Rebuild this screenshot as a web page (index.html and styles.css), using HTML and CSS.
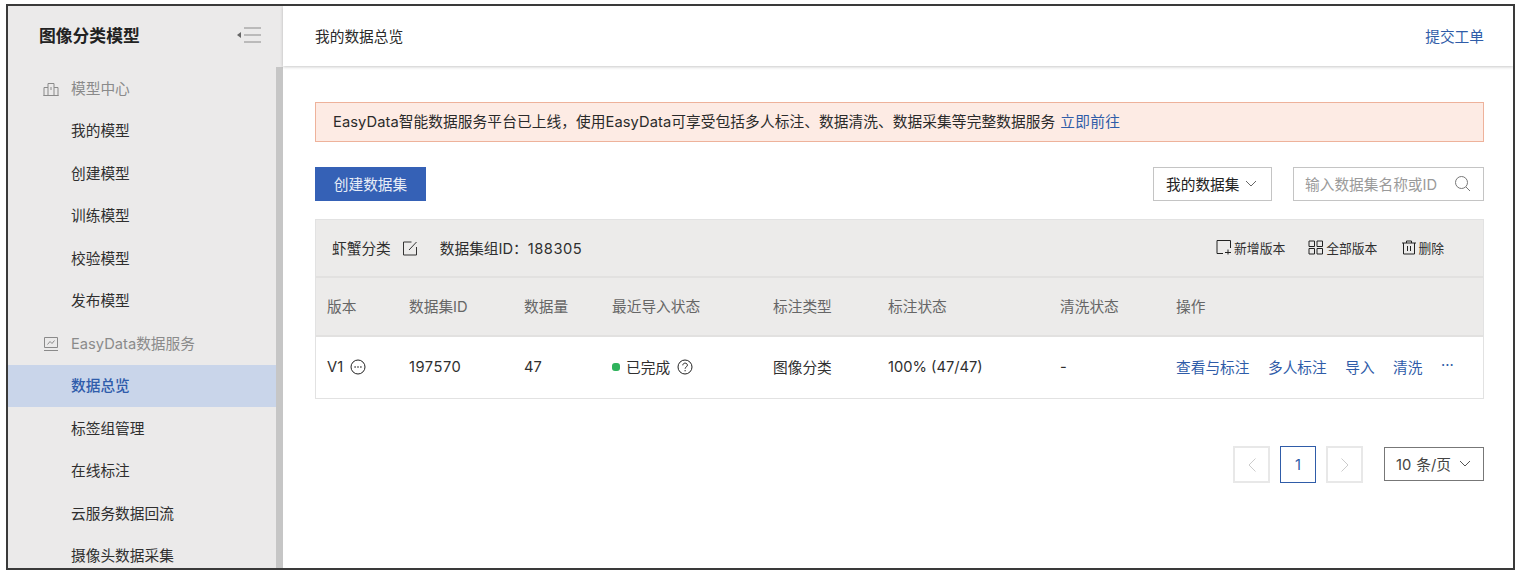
FILE: index.html
```html
<!DOCTYPE html>
<html lang="zh">
<head>
<meta charset="utf-8">
<title>我的数据总览</title>
<link rel="stylesheet" href="styles.css">
</head>
<body>
<div class="frame">
  <aside class="sidebar">
    <div class="side-head">
      <span class="side-title">图像分类模型</span>
      <svg class="collapse" width="26" height="18" viewBox="0 0 26 18"><path d="M1 9l4-3v6z" fill="#666"/><path d="M8 2h17M8 9h17M8 16h17" stroke="#8a8a8a" stroke-width="1" fill="none"/></svg>
    </div>
    <div class="side-body">
      <nav class="menu">
        <div class="menu-group">
          <svg class="group-icon" width="16" height="16" viewBox="0 0 16 16" fill="none" stroke="#8a8a8a"><path d="M1 15V6.500h4M5 15V2.500h6V15M11 6.500h4V15M.5 14.500h15M8 6v3"/></svg>
          模型中心
        </div>
        <a class="menu-item">我的模型</a>
        <a class="menu-item">创建模型</a>
        <a class="menu-item">训练模型</a>
        <a class="menu-item">校验模型</a>
        <a class="menu-item">发布模型</a>
        <div class="menu-group">
          <svg class="group-icon" width="16" height="16" viewBox="0 0 16 16" fill="none" stroke="#8a8a8a"><path d="M1.500 1.500h13v10h-13zM1 14.500h14M4.500 8.500l2.500-3 2 2 2.500-3"/></svg>
          EasyData数据服务
        </div>
        <a class="menu-item active">数据总览</a>
        <a class="menu-item">标签组管理</a>
        <a class="menu-item">在线标注</a>
        <a class="menu-item">云服务数据回流</a>
        <a class="menu-item">摄像头数据采集</a>
      </nav>
      <div class="scrollbar"></div>
    </div>
  </aside>
  <main class="main">
    <header class="topbar">
      <span class="crumb">我的数据总览</span>
      <a class="link">提交工单</a>
    </header>
    <section class="content">
      <div class="notice"><span class="notice-text">EasyData智能数据服务平台已上线，使用EasyData可享受包括多人标注、数据清洗、数据采集等完整数据服务</span><a class="link notice-link">立即前往</a></div>
      <div class="toolbar">
        <button class="primary">创建数据集</button>
        <div class="filters">
          <div class="select">我的数据集
            <svg class="chev" width="12" height="8" viewBox="0 0 12 8" fill="none" stroke="#666"><path d="M1 1l5 5 5-5"/></svg>
          </div>
          <div class="search">
            <span>输入数据集名称或ID</span>
            <svg width="17" height="17" viewBox="0 0 17 17" fill="none" stroke="#777"><circle cx="7.500" cy="7.500" r="6"/><path d="M12 12l4 4"/></svg>
          </div>
        </div>
      </div>
      <div class="table">
        <div class="group-row">
          <span>虾蟹分类</span>
          <svg class="edit" width="15" height="15" viewBox="0 0 15 15" fill="none" stroke="#333"><path d="M13.500 6v8h-13V1h8M6 9l7.500-8"/></svg>
          <span class="group-id">数据集组ID：<span class="num">188305</span></span>
          <div class="group-actions">
            <span class="action"><svg width="16" height="16" viewBox="0 0 16 16" fill="none" stroke="#222"><path d="M7 14.500H1V1.500h13.500V9M9 13.500h6M12 10.500v5"/></svg>新增版本</span>
            <span class="action"><svg width="16" height="15" viewBox="0 0 16 15" fill="none" stroke="#222"><path d="M1 1h5.500v5.500H1zM9 1h5.500v5.500H9zM1 8.500h5.500V14H1zM9 8.500h5.500V14H9z"/></svg>全部版本</span>
            <span class="action"><svg width="14" height="15" viewBox="0 0 14 15" fill="none" stroke="#222"><path d="M0 3h14M4.500 3V1h5v2M1.500 3v11h11V3M5.500 6v5M8.500 6v5"/></svg>删除</span>
          </div>
        </div>
        <div class="cols head">
          <span>版本</span><span>数据集ID</span><span>数据量</span><span>最近导入状态</span><span>标注类型</span><span>标注状态</span><span>清洗状态</span><span>操作</span>
        </div>
        <div class="cols row">
          <span class="ver">V1
            <svg width="16" height="16" viewBox="0 0 16 16" fill="none"><circle cx="8" cy="8" r="7" stroke="#222"/><path d="M4.500 8h1.200M7.400 8h1.200M10.300 8h1.200" stroke="#222" stroke-width="1.300"/></svg>
          </span>
          <span class="num">197570</span>
          <span>47</span>
          <span class="status"><i class="dot"></i>已完成
            <svg width="16" height="16" viewBox="0 0 16 16" fill="none" stroke="#222"><circle cx="8" cy="8" r="7"/><path d="M5.800 6.300c0-3 4.600-2.800 4.600-.1 0 1.700-2.300 1.700-2.300 3.500M8.100 11v1.300"/></svg>
          </span>
          <span>图像分类</span>
          <span>100% (47/47)</span>
          <span>-</span>
          <span class="ops"><a class="link">查看与标注</a><a class="link">多人标注</a><a class="link">导入</a><a class="link">清洗</a><a class="link">···</a></span>
        </div>
      </div>
      <div class="pager">
        <span class="page disabled"><svg width="10" height="16" viewBox="0 0 10 16" fill="none" stroke="#ccc"><path d="M8.500 1.500L2 8l6.500 6.500"/></svg></span>
        <span class="page current">1</span>
        <span class="page disabled"><svg width="10" height="16" viewBox="0 0 10 16" fill="none" stroke="#ccc"><path d="M1.500 1.500L8 8l-6.500 6.500"/></svg></span>
        <div class="size">10 条/页
          <svg class="chev" width="12" height="8" viewBox="0 0 12 8" fill="none" stroke="#555"><path d="M1 1l5 5 5-5"/></svg>
        </div>
      </div>
    </section>
  </main>
</div>
</body>
</html>
```
FILE: styles.css
```css
* { box-sizing: border-box; }
html, body { margin: 0; height: 100%; background: #fff; overflow: hidden; }
body {
  padding: 4px 7px 5px 6px;
  font-family: Inter, "Noto Sans CJK SC", sans-serif;
  font-size: 14.7px;
  color: #2a2a2a;
}
.frame {
  height: 566px;
  border: 2px solid #3a3a3a;
  display: flex;
  overflow: hidden;
}
.sidebar {
  width: 275px;
  flex: none;
  background: #ebeaea;
  display: flex;
  flex-direction: column;
  min-height: 0;
}
.side-head {
  height: 61px;
  flex: none;
  padding: 0 21px 4px 31px;
  display: flex;
  align-items: center;
  justify-content: space-between;
}
.side-title { font-size: 16.8px; font-weight: 700; color: #222; }
.side-body { flex: 1; display: flex; min-height: 0; }
.menu { flex: 1; min-width: 0; }
.scrollbar { width: 7px; flex: none; background: #c6c6c6; }
.menu-group, .menu-item {
  height: 42.5px;
  display: flex;
  align-items: center;
  padding: 0 0 2px 63px;
  position: relative;
}
.menu-group { color: #8a8a8a; }
.group-icon { position: absolute; left: 35px; top: 14px; }
.menu-item { color: #2f2f2f; }
.menu-item.active { background: #c9d5ea; color: #2f5cab; font-weight: 500; }
.main { flex: 1; min-width: 0; display: flex; flex-direction: column; background: #fff; }
.topbar {
  height: 60px;
  flex: none;
  padding: 0 29px 2px 32px;
  display: flex;
  align-items: center;
  justify-content: space-between;
  box-shadow: 0 1px 3px rgba(0,0,0,.22);
}
.crumb { color: #2a2a2a; }
.link { color: #2f5ca8; }
.content { padding: 36px 29px 0 32px; flex: 1; min-height: 0; }
.notice {
  height: 40px;
  background: #fdebe4;
  border: 1px solid #eeb29b;
  display: flex;
  align-items: center;
  padding: 0 0 3px 17px;
  color: #2a2a2a;
}
.notice-text { letter-spacing: .08px; }
.notice-link { margin-left: 5px; letter-spacing: .3px; }
.toolbar {
  margin-top: 25px;
  display: flex;
  justify-content: space-between;
  align-items: flex-start;
}
.primary {
  width: 111px;
  height: 34px;
  background: #3561b6;
  border: 0;
  color: #e8edf7;
  font: inherit;
  padding: 0 0 2px;
}
.filters { display: flex; gap: 21px; }
.chev { margin-top: 2px; }
.select {
  width: 119px;
  height: 34px;
  border: 1px solid #c4c4c4;
  display: flex;
  align-items: center;
  justify-content: space-between;
  padding: 0 14px 2px 12px;
  color: #222;
}
.search {
  width: 191px;
  height: 34px;
  border: 1px solid #c4c4c4;
  display: flex;
  align-items: center;
  justify-content: space-between;
  padding: 0 12px 2px 11px;
  color: #9a9a9a;
}
.table { margin-top: 18px; border: 1px solid #e2e2e2; }
.group-row {
  height: 58px;
  background: #ecebea;
  border-bottom: 2px solid #e2e1e0;
  display: flex;
  align-items: center;
  padding: 0 0 2px 16px;
  color: #2f2f2f;
}
.edit { margin: 2px 0 0 12px; }
.group-id { margin-left: 22px; }
.num { letter-spacing: .5px; }
.group-actions { margin-left: auto; margin-right: 39px; display: flex; gap: 23px; font-size: 12.8px; }
.action { display: flex; align-items: center; gap: 2px; }
.action:last-child { margin-left: 2px; }
.cols {
  display: grid;
  grid-template-columns: 82px 115px 88px 161px 115px 172px 116px 1fr;
  align-items: center;
  padding: 0 0 2px 11px;
}
.head { height: 59px; background: #ecebea; border-bottom: 2px solid #e2e1e0; color: #666; }
.row { height: 61px; background: #fff; color: #2f2f2f; }
.ver, .status { display: flex; align-items: center; }
.ver svg { margin-left: 7px; }
.dot { width: 8px; height: 8px; border-radius: 3px; background: #2fb35c; margin-right: 6px; }
.status svg { margin-left: 7px; }
.ops { display: flex; gap: 18.5px; }
.pager {
  margin-top: 47px;
  display: flex;
  align-items: flex-start;
  justify-content: flex-end;
}
.page {
  width: 37px;
  height: 37px;
  display: flex;
  align-items: center;
  justify-content: center;
  border: 2px solid #e8e8e8;
}
.page.current {
  width: 36px;
  margin: 0 10px;
  border: 1px solid #2f5ca8;
  color: #2f5ca8;
}
.size {
  margin-left: 21px;
  margin-top: 1px;
  width: 100px;
  height: 34px;
  border: 1px solid #777;
  display: flex;
  align-items: center;
  justify-content: space-between;
  padding: 0 12px 2px 11px;
  word-spacing: 1px;
  color: #444;
}
```
